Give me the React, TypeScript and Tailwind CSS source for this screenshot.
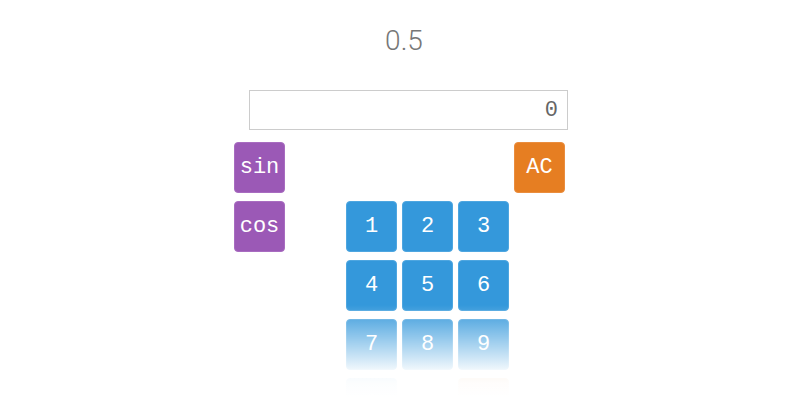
import React from "react";

const mono = { fontFamily: '"Liberation Mono", "DejaVu Sans Mono", monospace' };

function Btn({ label, color, col, row }: { label: string; color: "blue" | "purple" | "orange"; col: number; row: number }) {
  const cls =
    color === "blue"
      ? "bg-[#3498db] border-[#4ea6e0]"
      : color === "purple"
      ? "bg-[#9b59b6] border-[#a86cc0]"
      : "bg-[#e67e22] border-[#ea8d3e]";
  return (
    <div
      className={`flex h-[51px] w-[51px] items-center justify-center rounded-[4px] border text-[22px] text-white ${cls}`}
      style={{ ...mono, gridColumnStart: col, gridRowStart: row }}
    >
      {label}
    </div>
  );
}

export default function App() {
  return (
    <div className="relative h-[400px] w-[800px] overflow-hidden bg-white">
      <div
        className="h-[60px] pt-[21px] pl-[8px] text-center text-[28px] font-light leading-[39px] text-[#777777]"
        style={{ fontFamily: 'Roboto, "Noto Sans", sans-serif' }}
      >
        0.5
      </div>
      <div className="mt-[30px] pl-[249px]">
        <div
          className="flex h-[40px] w-[319px] items-center justify-end border border-[#cccccc] pr-[9px] text-[22px] text-[#666666]"
          style={mono}
        >
          0
        </div>
      </div>
      <div className="mt-[12px] flex justify-center pr-[1px]">
        <div className="grid grid-cols-[repeat(6,51px)] grid-rows-[repeat(5,51px)] gap-x-[5px] gap-y-[8px]">
          <Btn label="sin" color="purple" col={1} row={1} />
          <Btn label="AC" color="orange" col={6} row={1} />
          <Btn label="cos" color="purple" col={1} row={2} />
          <Btn label="1" color="blue" col={3} row={2} />
          <Btn label="2" color="blue" col={4} row={2} />
          <Btn label="3" color="blue" col={5} row={2} />
          <Btn label="4" color="blue" col={3} row={3} />
          <Btn label="5" color="blue" col={4} row={3} />
          <Btn label="6" color="blue" col={5} row={3} />
          <Btn label="7" color="blue" col={3} row={4} />
          <Btn label="8" color="blue" col={4} row={4} />
          <Btn label="9" color="blue" col={5} row={4} />
          <Btn label="0" color="blue" col={3} row={5} />
          <Btn label="=" color="orange" col={5} row={5} />
        </div>
      </div>
      <div className="pointer-events-none absolute left-0 top-[305px] h-[95px] w-full bg-[linear-gradient(to_bottom,rgba(255,255,255,0)_0px,rgba(255,255,255,0.93)_65px,rgba(255,255,255,0.985)_78px,#ffffff_92px)]" />
    </div>
  );
}
